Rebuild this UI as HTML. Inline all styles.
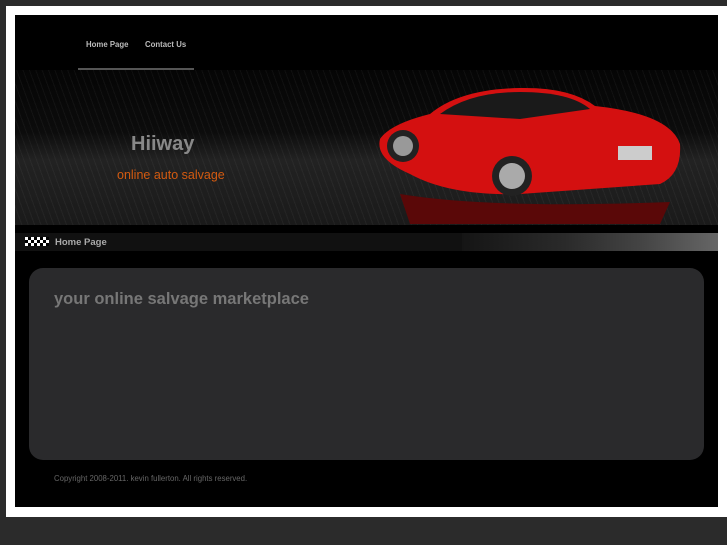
<!DOCTYPE html>
<html><head><style>
body{margin:0;width:727px;height:545px;background:#2b2b2b;position:relative;overflow:hidden;font-family:"Liberation Sans",Arial,sans-serif}
.frame{position:absolute;left:6px;top:6px;width:721px;height:511px;background:#fff}
.inner{position:absolute;left:15px;top:15px;width:703px;height:492px;background:#000}
.nav{position:absolute;top:40px;font-size:7.8px;font-weight:bold;color:#bbb}
.banner{position:absolute;left:15px;top:70px;width:703px;height:155px;overflow:hidden;
background:linear-gradient(180deg,#050505 0%,#0c0c0c 40%,#222 58%,#1a1a1a 100%)}
.stripes{position:absolute;inset:0;background:repeating-linear-gradient(70deg,rgba(255,255,255,0.04) 0 1px,transparent 1px 6px)}
.bar{position:absolute;left:15px;top:233px;width:703px;height:18px;background:#111}
.box{position:absolute;left:29px;top:268px;width:675px;height:192px;background:#2a2a2c;border-radius:14px}
</style></head><body>
<div class="frame"></div>
<div class="inner"></div>
<div class="nav" style="left:86px">Home Page</div>
<div class="nav" style="left:145px">Contact Us</div>
<div style="position:absolute;left:78px;top:68px;width:116px;height:2px;background:#555"></div>
<div class="banner"><div class="stripes"></div>
<div style="position:absolute;left:116px;top:63px;font-size:20px;font-weight:bold;color:#888">Hiiway</div>
<div style="position:absolute;left:102px;top:98px;font-size:12.5px;color:#d35a10">online auto salvage</div>
<svg style="position:absolute;left:355px;top:14px" width="320" height="145" viewBox="0 0 320 145">
<path d="M60 30 Q90 5 150 4 Q200 3 225 22 Q300 30 310 60 Q312 90 290 100 L150 110 Q80 112 40 90 Q5 75 10 55 Q20 40 60 30Z" fill="#d41010"/>
<path d="M70 30 Q100 8 150 8 Q200 8 220 25 L150 35 Z" fill="#1a1a1a"/>
<circle cx="33" cy="62" r="16" fill="#222"/><circle cx="33" cy="62" r="10" fill="#999"/>
<circle cx="142" cy="92" r="20" fill="#222"/><circle cx="142" cy="92" r="13" fill="#aaa"/>
<rect x="248" y="62" width="34" height="14" fill="#ccc"/>
<path d="M30 110 Q120 125 300 118 L290 140 L40 140Z" fill="#5a0808"/>
</svg>
</div>
<div class="bar"></div>
<div style="position:absolute;left:462px;top:233px;width:256px;height:18px;background:linear-gradient(90deg,#151515,#2a2a2a 40%,#444 70%,#666)"></div>
<svg style="position:absolute;left:25px;top:237px" width="24" height="9">
<rect width="24" height="9" fill="#000"/>
<g fill="#fff"><rect x="0" y="0" width="3" height="3"/><rect x="6" y="0" width="3" height="3"/><rect x="12" y="0" width="3" height="3"/><rect x="18" y="0" width="3" height="3"/><rect x="3" y="3" width="3" height="3"/><rect x="9" y="3" width="3" height="3"/><rect x="15" y="3" width="3" height="3"/><rect x="21" y="3" width="3" height="3"/><rect x="0" y="6" width="3" height="3"/><rect x="6" y="6" width="3" height="3"/><rect x="12" y="6" width="3" height="3"/><rect x="18" y="6" width="3" height="3"/></g></svg>
<div style="position:absolute;left:55px;top:237px;font-size:9.5px;font-weight:bold;color:#aaa">Home Page</div>
<div class="box"></div>
<div style="position:absolute;left:54px;top:290px;font-size:16.5px;font-weight:bold;color:#777">your online salvage marketplace</div>
<div style="position:absolute;left:54px;top:474px;font-size:7.8px;color:#666">Copyright 2008-2011. kevin fullerton. All rights reserved.</div>
</body></html>
